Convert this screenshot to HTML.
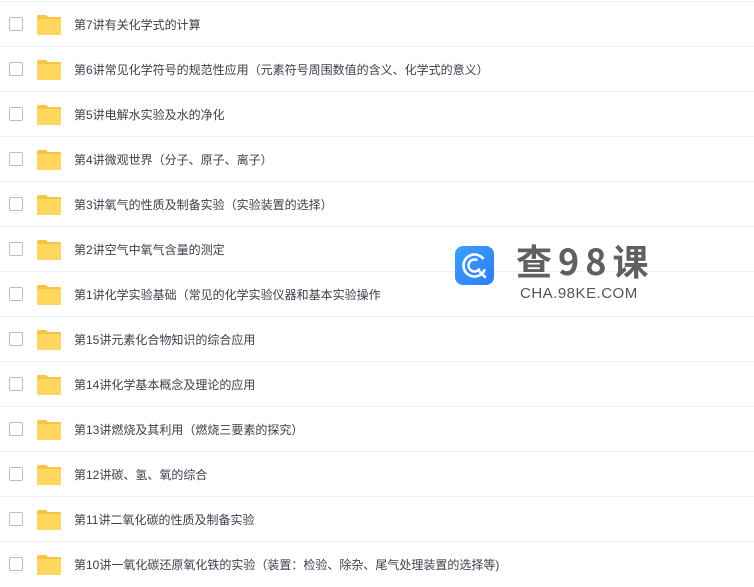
<!DOCTYPE html>
<html><head><meta charset="utf-8"><style>
body{margin:0;width:754px;height:577px;background:#fff;overflow:hidden;position:relative;font-family:"Liberation Sans","Noto Sans CJK SC",sans-serif;}
.row{position:absolute;left:0;width:754px;height:45px;border-top:1px solid #eef0f4;}
.cb{position:absolute;left:9px;top:15px;width:12px;height:12px;border:1px solid #b8c0cc;border-radius:2px;background:#fff;}
.fd{position:absolute;left:36px;top:13px;width:26px;height:20px;}
.t{position:absolute;left:74px;top:15px;font-size:12px;color:#3a3f4a;line-height:16px;white-space:nowrap;}
</style></head><body>
<div id="rows"></div>
<div style="position:absolute;left:455px;top:246px;width:39px;height:39px;border-radius:8px;background:linear-gradient(135deg,#3aa0ff,#2f7df6);">
<svg width="39" height="39" viewBox="0 0 39 39"><circle cx="19.5" cy="19.5" r="11" fill="none" stroke="#fff" stroke-width="2.6" stroke-dasharray="58 12" transform="rotate(20 19.5 19.5)"/><circle cx="19.5" cy="19.5" r="6" fill="none" stroke="#fff" stroke-width="2.4" stroke-dasharray="28 10" transform="rotate(30 19.5 19.5)"/><path d="M25 26 L30 31" stroke="#fff" stroke-width="2.6" stroke-linecap="round"/></svg></div>
<div style="position:absolute;left:516px;top:236px;font-size:36px;font-weight:bold;color:#606060;letter-spacing:6px;font-family:'Noto Sans CJK SC',sans-serif;line-height:48px">查98课</div>
<div style="position:absolute;left:520px;top:285px;font-size:15px;color:#555;letter-spacing:0.5px;line-height:18px">CHA.98KE.COM</div>
<script>
var t=["第7讲有关化学式的计算","第6讲常见化学符号的规范性应用（元素符号周围数值的含义、化学式的意义）","第5讲电解水实验及水的净化","第4讲微观世界（分子、原子、离子）","第3讲氧气的性质及制备实验（实验装置的选择）","第2讲空气中氧气含量的测定","第1讲化学实验基础（常见的化学实验仪器和基本实验操作","第15讲元素化合物知识的综合应用","第14讲化学基本概念及理论的应用","第13讲燃烧及其利用（燃烧三要素的探究）","第12讲碳、氢、氧的综合","第11讲二氧化碳的性质及制备实验","第10讲一氧化碳还原氧化铁的实验（装置：检验、除杂、尾气处理装置的选择等)"];
var h="";
for(var i=0;i<t.length;i++){
h+='<div class="row" style="top:'+(1+45*i)+'px"><div class="cb"></div><svg class="fd" viewBox="0 0 26 20"><path d="M1 2 Q1 0 3 0 H10 L12 2 H24 Q25 2 25 3 V19 Q25 20 24 20 H2 Q1 20 1 19 Z" fill="#f7c444"/><rect x="1" y="4" width="24" height="16" rx="1" fill="#ffd75e"/></svg><div class="t">'+t[i]+'</div></div>';
}
document.getElementById("rows").innerHTML=h;
</script>
</body></html>
